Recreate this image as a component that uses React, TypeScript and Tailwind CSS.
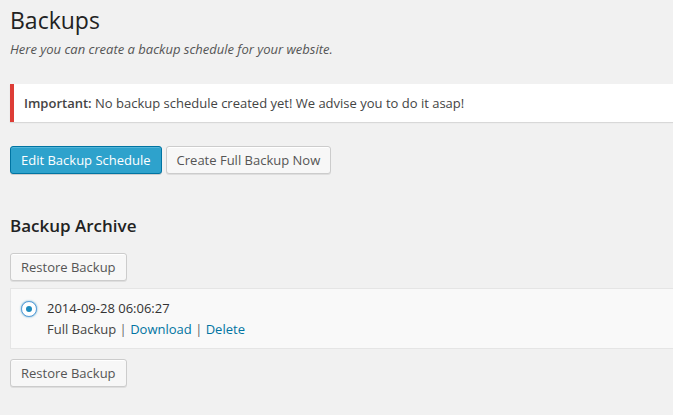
export default function App() {
  return (
    <div className="min-h-screen overflow-hidden bg-[#f1f1f1] pl-[10px] font-['Open_Sans',sans-serif] text-[13px] text-[#444]">
      <h2 className="pt-[6px] text-[23px] leading-[29px] font-normal text-[#222]">Backups</h2>
      <p className="mt-[4px] italic leading-[20px] text-[#555]">
        Here you can create a backup schedule for your website.
      </p>

      <div className="-mr-[40px] mt-[25px] flex h-[38px] items-center border-l-4 border-[#dd3d36] bg-white pl-[10px] shadow-[0_1px_1px_0_rgba(0,0,0,0.1)]">
        <p className="leading-[20px]">
          <strong className="font-semibold">Important:</strong> No backup schedule created yet! We
          advise you to do it asap!
        </p>
      </div>

      <div className="mt-[24px] flex gap-[4px]">
        <button className="h-[28px] rounded-[3px] border border-[#0074a2] bg-[#2ea2cc] px-[10px] pb-[1px] leading-[26px] text-white shadow-[inset_0_1px_0_rgba(120,200,230,0.5),0_1px_0_rgba(0,0,0,0.15)]">
          Edit Backup Schedule
        </button>
        <button className="h-[28px] rounded-[3px] border border-[#ccc] bg-[#f7f7f7] px-[10px] pb-[1px] leading-[26px] text-[#555] shadow-[inset_0_1px_0_#fff,0_1px_0_rgba(0,0,0,0.08)]">
          Create Full Backup Now
        </button>
      </div>

      <h3 className="mt-[40px] text-[17px] leading-[24px] font-semibold text-[#222]">Backup Archive</h3>

      <button className="mt-[15px] h-[28px] rounded-[3px] border border-[#ccc] bg-[#f7f7f7] px-[10px] pb-[1px] leading-[26px] text-[#555] shadow-[inset_0_1px_0_#fff,0_1px_0_rgba(0,0,0,0.08)]">
        Restore Backup
      </button>

      <div className="-mr-[40px] mt-[7px] flex gap-[10px] border border-[#e5e5e5] bg-[#f9f9f9] pt-[9px] pb-[9px] pl-[10px]">
        <span className="mt-[3px] flex h-[16px] w-[16px] items-center justify-center rounded-full border border-[#5b9dd9] bg-white shadow-[0_0_2px_rgba(30,140,190,0.8)]">
          <span className="h-[6px] w-[6px] rounded-full bg-[#1e8cbe]" />
        </span>
        <div className="leading-[20px]">
          <div className="text-[#333]">2014-09-28 06:06:27</div>
          <div className="mt-[1px]">
            Full Backup <span className="text-[#666]">|</span>{" "}
            <a className="text-[#0074a2]">Download</a> <span className="text-[#666]">|</span>{" "}
            <a className="text-[#0074a2]">Delete</a>
          </div>
        </div>
      </div>

      <button className="mt-[10px] h-[28px] rounded-[3px] border border-[#ccc] bg-[#f7f7f7] px-[10px] pb-[1px] leading-[26px] text-[#555] shadow-[inset_0_1px_0_#fff,0_1px_0_rgba(0,0,0,0.08)]">
        Restore Backup
      </button>
    </div>
  );
}
